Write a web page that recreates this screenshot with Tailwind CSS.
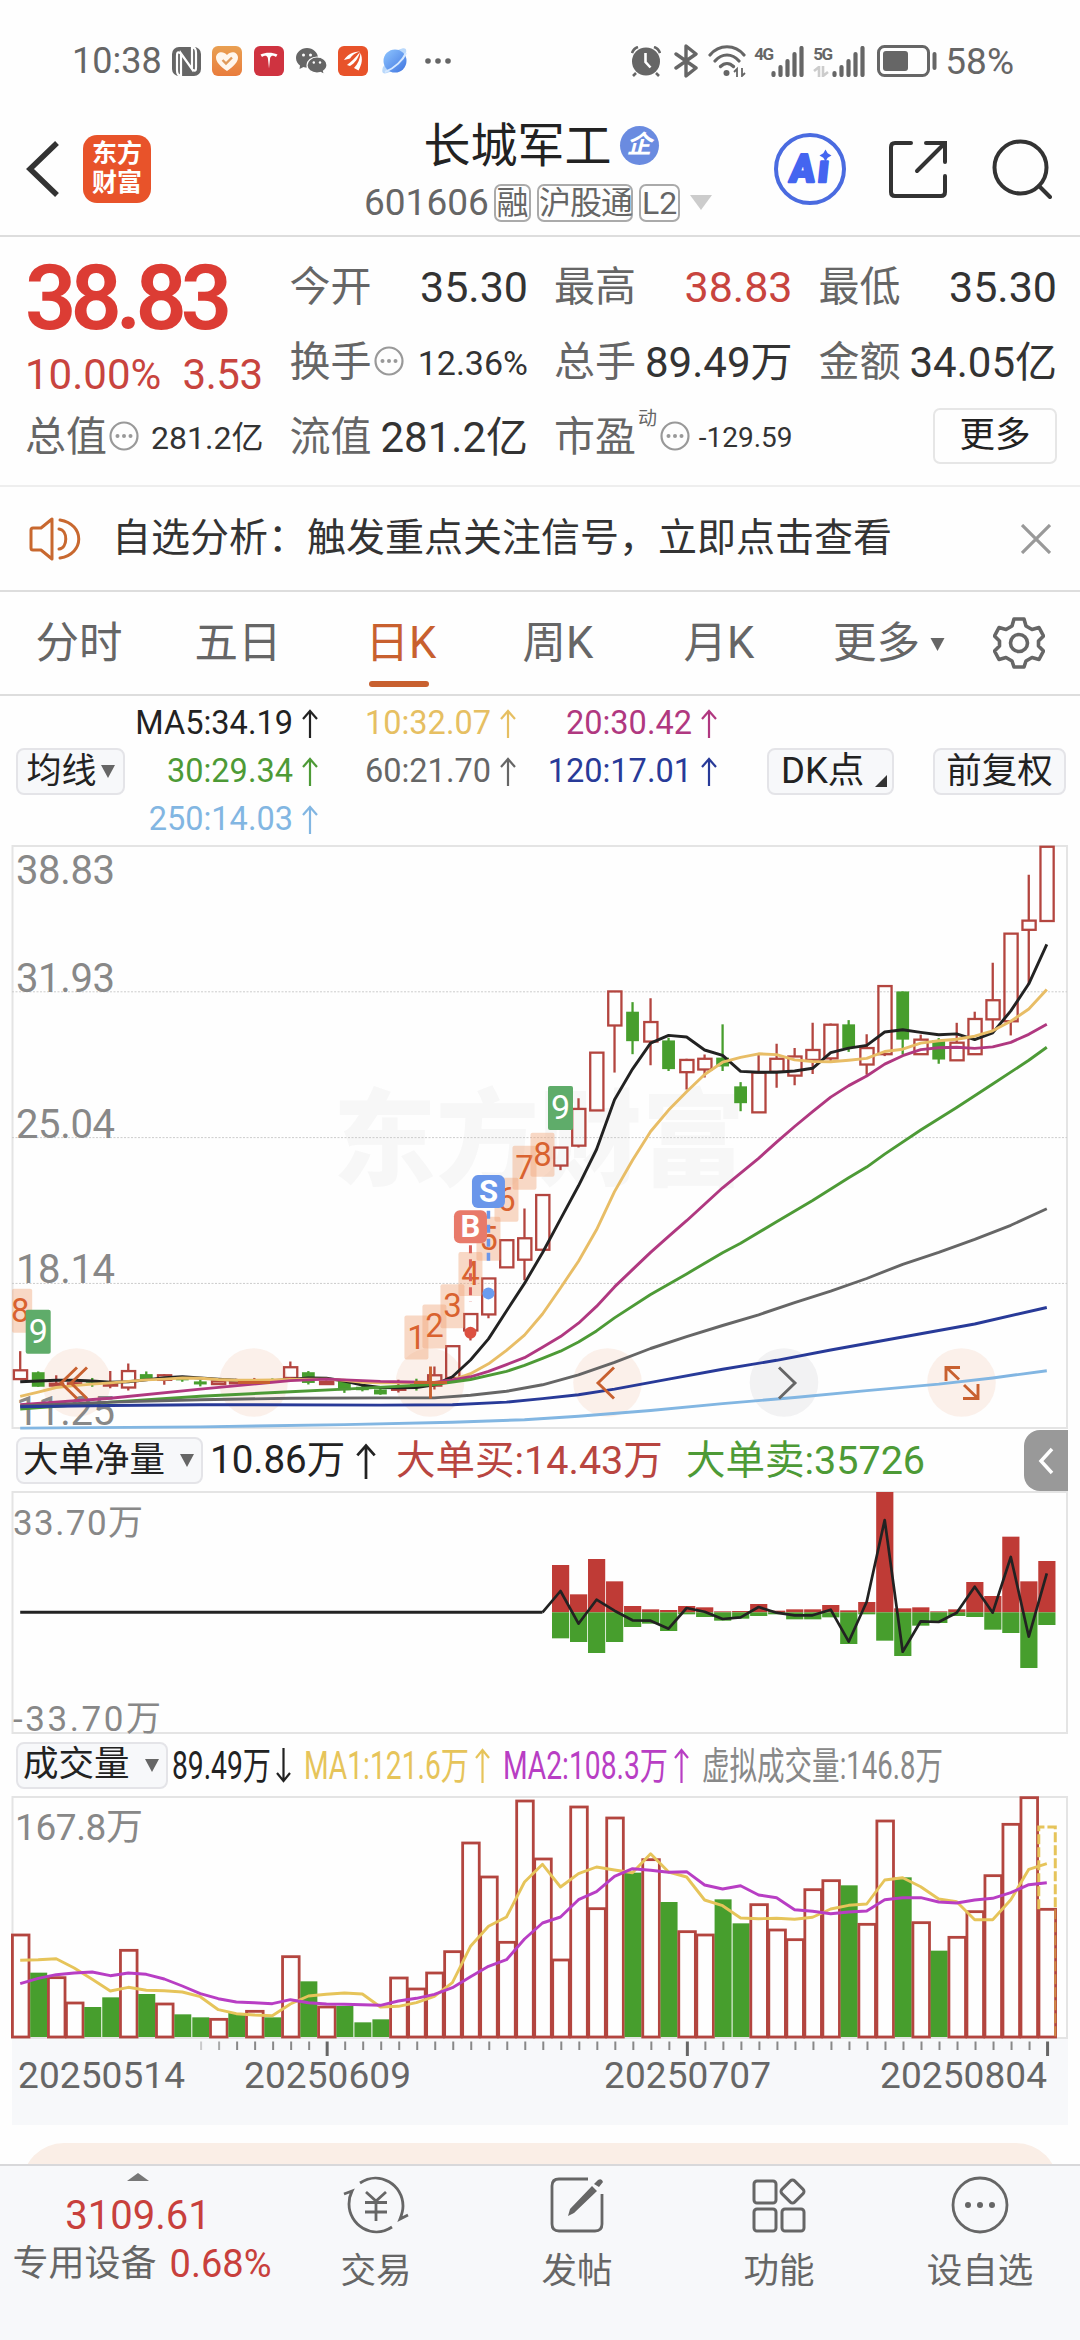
<!DOCTYPE html>
<html lang="zh-CN">
<head>
    <meta charset="UTF-8">
    <meta name="viewport" content="width=device-width, initial-scale=1.0">
    <title>长城军工 601606</title>
    <script src="https://cdn.jsdelivr.net/npm/@tailwindcss/browser@4"></script>
</head>
<body class="bg-[#fefefe] font-['Roboto','Noto_Sans_CJK_SC',sans-serif] text-[#333] w-[1080px] h-[2340px] overflow-hidden flex flex-col leading-none whitespace-nowrap">

    <svg class="hidden">
        <symbol id="arrow-up" viewBox="0 0 16 29"><path d="M8 29V2M1 10L8 2l7 8" fill="none" stroke="currentColor" stroke-width="2.200"/></symbol>
        <symbol id="caret" viewBox="0 0 14 13"><path d="M0 0h14L7 13z" fill="currentColor"/></symbol>
        <symbol id="info" viewBox="0 0 30 30">
            <circle cx="15" cy="15" r="13.5" fill="none" stroke="#999" stroke-width="2.200"/>
            <g fill="#999"><circle cx="8.5" cy="15" r="2"/><circle cx="15" cy="15" r="2"/><circle cx="21.500" cy="15" r="2"/></g>
        </symbol>
        <symbol id="bars" viewBox="0 0 33 31">
            <path d="M2.500 27v2M9.500 21v8M16.500 15v14M23.500 8v21M30.500 2v27" stroke="#666" stroke-width="4.200" stroke-linecap="round"/>
        </symbol>
    </svg>

    <!-- status bar -->
    <div class="h-[122px] shrink-0 flex items-center pl-[72px] pr-[66px] text-[#666]">
        <span class="text-[36px] w-[100px]">10:38</span>
        <svg class="w-[29px] h-[29px] mr-[11px]" viewBox="0 0 29 29">
            <rect width="29" height="29" rx="7" fill="#666"/>
            <path d="M9 29V6.500L20 22V0M9 6.500C5 4 5 6 5 9v14c0 4 1 5 4 6M20 22.500c4 2.500 4 .5 4-2.500V6c0-4-1-5-4-6" fill="none" stroke="#fff" stroke-width="2.200"/>
        </svg>
        <svg class="w-[30px] h-[30px] mr-[12px]" viewBox="0 0 30 30">
            <defs><linearGradient id="heart-bg" x2="0" y2="1"><stop stop-color="#e9a052"/><stop offset="1" stop-color="#e97c3c"/></linearGradient></defs>
            <rect width="30" height="30" rx="6" fill="url(#heart-bg)"/>
            <path d="M15 25C8 20 4 16 4 11.500 4 6 11 4 15 9c4-5 11-3 11 2.500C26 16 22 20 15 25z" fill="#fff6ec"/>
            <path d="M10.500 14l3.500 3.500 6-6" fill="none" stroke="#e09a5a" stroke-width="2.400"/>
        </svg>
        <svg class="w-[30px] h-[30px] mr-[12px]" viewBox="0 0 30 30">
            <rect width="30" height="30" rx="6" fill="#cf3340"/>
            <path d="M6.500 8.500C12 6 18 6 23.500 8.500L22 11c-1-1-2.500-1.200-4-1.300-1.500.8-2 2-2 3.500L15 22.500l-1-9.300c0-1.500-.5-2.700-2-3.500-1.500.1-3 .3-4 1.300z" fill="#fff"/>
        </svg>
        <svg class="w-[31px] h-[27px] mr-[11px]" viewBox="0 0 31 27">
            <path d="M11 0C5 0 0 4.500 0 10c0 3.500 2 6 4 7.500L3.500 21l4-2c1 .4 2.500.5 3.500.5C17 19.500 22 15.500 22 10S17 0 11 0z" fill="#666"/>
            <path d="M21 9c-5.500 0-10 3.700-10 8.200S15.500 25 21 25c1.500 0 2.500-.2 3.500-.5l4 2-1-3.500c2-1.300 3.500-3.300 3.500-6C31 12.700 26.500 9 21 9z" fill="#666" stroke="#fff" stroke-width="1.200"/>
            <g fill="#fff"><circle cx="7.500" cy="7" r="1.500"/><circle cx="14.500" cy="7" r="1.500"/><circle cx="17.800" cy="14.500" r="1.200"/><circle cx="24" cy="14.500" r="1.200"/></g>
        </svg>
        <svg class="w-[30px] h-[30px] mr-[14px]" viewBox="0 0 30 30">
            <rect width="30" height="30" rx="6" fill="#e8532a"/>
            <path d="M6 14C9 9 14 6 22 5.500 17 7 14 9 12 12.500L6 14zM9 19c4-3 8-7 13-13-1.500 6-5 11-10 14zM16 22c4-4 6-9 6.500-15 2.500 6 1.500 11-2 17.500z" fill="#fff"/>
        </svg>
        <svg class="w-[26px] h-[26px] mr-[17px]" viewBox="0 0 26 26">
            <defs><linearGradient id="planet" x2="1" y2="1"><stop stop-color="#8fc6ff"/><stop offset="1" stop-color="#3f74e0"/></linearGradient></defs>
            <path d="M16 2c7-3 9-2 8 3-1 6-9 15-16 19-7 3-9 1-7-5" fill="#b9d8fb"/>
            <circle cx="13" cy="13" r="11.500" fill="url(#planet)"/>
            <path d="M24 5C21 12 13 20 3 24" fill="none" stroke="#d5e8ff" stroke-width="2"/>
        </svg>
        <svg class="w-[26px] h-[6px]" viewBox="0 0 26 6"><g fill="#666"><circle cx="3" cy="3" r="2.800"/><circle cx="13" cy="3" r="2.800"/><circle cx="23" cy="3" r="2.800"/></g></svg>

        <div class="ml-auto flex items-center">
            <svg class="w-[30px] h-[31px] mr-[13px]" viewBox="0 0 30 31">
                <circle cx="15" cy="15.500" r="14" fill="#666"/>
                <path d="M1 7C2 4 4 2 7 1M29 7c-1-3-3-5-6-6M5 27l-3 3M25 27l3 3" stroke="#666" stroke-width="2.600" fill="none"/>
                <path d="M14.500 7v9l5 5.500" fill="none" stroke="#fff" stroke-width="2.600"/>
            </svg>
            <svg class="w-[24px] h-[34px] mr-[10px]" viewBox="0 0 24 34"><path d="M2 10l20 14-10 8V2l10 8L2 24" fill="none" stroke="#666" stroke-width="3.400" stroke-linejoin="round" stroke-linecap="round"/></svg>
            <svg class="w-[38px] h-[32px] mr-[8px]" viewBox="0 0 38 32">
                <path d="M2 10C11-1 27-1 36 10M7 16c7-8 17-8 24 0M12.500 21.500c4-4 9-4 13 0" fill="none" stroke="#666" stroke-width="3.200" stroke-linecap="round"/>
                <circle cx="18.500" cy="28" r="3" fill="#666"/>
                <path d="M26 27l3-3v8M37 28l-3 3v-8" fill="none" stroke="#666" stroke-width="1.800"/>
            </svg>
            <div class="flex mr-[9px]">
                <span class="text-[17px] font-bold w-[17px] tracking-[-1.500px]">4G</span>
                <svg class="w-[33px] h-[31px]"><use href="#bars"/></svg>
            </div>
            <div class="flex mr-[12px]">
                <div class="w-[19px]">
                    <div class="text-[17px] font-bold tracking-[-1.500px]">5G</div>
                    <svg class="w-[16px] h-[11px] mt-[3px]" viewBox="0 0 16 11"><path d="M1 5l5-4v10M15 6l-5 4V0" fill="none" stroke="#ccc" stroke-width="2.600"/></svg>
                </div>
                <svg class="w-[33px] h-[31px]"><use href="#bars"/></svg>
            </div>
            <svg class="w-[60px] h-[32px] mr-[8px]" viewBox="0 0 60 32">
                <rect x="1.500" y="1.500" width="50" height="29" rx="6" fill="none" stroke="#666" stroke-width="3"/>
                <rect x="6" y="6" width="25" height="20" rx="3" fill="#666"/>
                <path d="M57.500 9v14" stroke="#666" stroke-width="4" stroke-linecap="round"/>
            </svg>
            <span class="text-[37px]">58%</span>
        </div>
    </div>

    <!-- title bar -->
    <header class="h-[115px] shrink-0 flex items-center border-b-2 border-[#ddd]">
        <svg class="w-[34px] h-[56px] ml-[26px] mt-[-20px]" viewBox="0 0 34 56"><path d="M31 2L4 28l27 26" fill="none" stroke="#333" stroke-width="5.500"/></svg>
        <div class="w-[68px] h-[68px] ml-[23px] mt-[-20px] rounded-[14px] bg-[#e8532a] text-white font-bold text-[25px] leading-[29px] pt-[4px] text-center">东方<br>财富</div>
        <div class="ml-[213px] w-[348px] mt-[-15px] flex flex-col items-center">
            <div class="flex items-center h-[50px] pl-[6px]">
                <span class="text-[47px] text-[#222] leading-[50px]">长城军工</span>
                <span class="ml-[8px] w-[39px] h-[39px] rounded-full bg-[#6a8be0] text-white text-[25px] font-bold italic leading-[38px] text-center">企</span>
            </div>
            <div class="mt-[13px] flex items-center text-[#666] text-[32px]">
                <span class="text-[37px] w-[130px]">601606</span>
                <span class="w-[37px] h-[38px] leading-[34px] border-2 border-[#aaa] rounded-[7px] text-center mr-[6px]">融</span>
                <span class="w-[96px] h-[38px] leading-[34px] border-2 border-[#aaa] rounded-[7px] text-center mr-[6px] tracking-[-1px]">沪股通</span>
                <span class="w-[41px] h-[38px] leading-[35px] border-2 border-[#aaa] rounded-[7px] text-center mr-[10px]">L2</span>
                <svg class="w-[22px] h-[15px] text-[#ccc]" viewBox="0 0 14 13" preserveAspectRatio="none"><path d="M0 0h14L7 13z" fill="currentColor"/></svg>
            </div>
        </div>
        <svg class="w-[72px] h-[72px] ml-[62px] mt-[-20px]" viewBox="0 0 72 72">
            <circle cx="36" cy="36" r="34" fill="none" stroke="#4a6be0" stroke-width="4"/>
            <g transform="skewX(-6)" font-size="39" font-weight="900" fill="#4465f0" stroke="#4465f0" stroke-width="2.500" stroke-linejoin="round">
                <text x="20" y="49.500" textLength="25" lengthAdjust="spacingAndGlyphs">A</text>
                <text x="48" y="49.500" textLength="11" lengthAdjust="spacingAndGlyphs">ı</text>
            </g>
            <path d="M51.500 16.500l2.200 3.800 3.800 2.200-3.800 2.200-2.200 3.800-2.200-3.800-3.800-2.200 3.800-2.200z" fill="#4465f0"/>
        </svg>
        <svg class="w-[58px] h-[58px] ml-[43px] mt-[-20px]" viewBox="0 0 58 58"><path d="M22 3H6q-4 0-4 4v45q0 4 4 4h46q4 0 4-4V36M37 3h19v19M55 4L28 31" fill="none" stroke="#333" stroke-width="4" stroke-linecap="round"/></svg>
        <svg class="w-[60px] h-[60px] ml-[45px] mt-[-20px]" viewBox="0 0 60 60"><circle cx="28.500" cy="28.500" r="26" fill="none" stroke="#333" stroke-width="4"/><path d="M47 47l11 11" stroke="#333" stroke-width="4" stroke-linecap="round"/></svg>
    </header>

    <!-- quote summary -->
    <section class="h-[250px] shrink-0 grid grid-cols-4 grid-rows-[75px_75px_75px] gap-x-[26px] pt-[13px] pl-[25px] pr-[23px] border-b-2 border-[#eee] text-[#333] text-[43px]">
        <div class="row-span-2 text-[#dc3c34]">
            <div class="text-[90px] font-semibold tracking-[-6px] leading-[98px]">38.83</div>
            <div class="flex justify-between text-[42px] leading-[54px] text-[#c8443e] pr-[1px]"><span>10.00%</span><span class="tracking-[-0.5px]">3.53</span></div>
        </div>
        <div class="flex items-center justify-between"><span class="text-[#666] text-[41px]">今开</span><span>35.30</span></div>
        <div class="flex items-center justify-between"><span class="text-[#666] text-[41px]">最高</span><span class="text-[#c8443e]">38.83</span></div>
        <div class="flex items-center justify-between"><span class="text-[#666] text-[41px]">最低</span><span>35.30</span></div>
        <div class="flex items-center"><span class="text-[#666] text-[41px]">换手</span><svg class="w-[30px] h-[30px] ml-[2px] mt-[-4px]"><use href="#info"/></svg><span class="ml-auto text-[34px]">12.36%</span></div>
        <div class="flex items-center justify-between"><span class="text-[#666] text-[41px]">总手</span><span class="text-[42px]">89.49万</span></div>
        <div class="flex items-center justify-between"><span class="text-[#666] text-[41px]">金额</span><span class="text-[42px]">34.05亿</span></div>
        <div class="flex items-center"><span class="text-[#666] text-[41px]">总值</span><svg class="w-[30px] h-[30px] ml-[2px] mt-[-4px]"><use href="#info"/></svg><span class="ml-auto text-[32px]">281.2亿</span></div>
        <div class="flex items-center justify-between"><span class="text-[#666] text-[41px]">流值</span><span class="text-[42px]">281.2亿</span></div>
        <div class="flex items-center"><span class="text-[#666] text-[41px]">市盈</span><span class="text-[#666] text-[19px] mb-[38px] ml-[2px]">动</span><svg class="w-[30px] h-[30px] ml-[3px] mt-[-4px]"><use href="#info"/></svg><span class="ml-auto text-[28px]">-129.59</span></div>
        <div class="flex items-center justify-end"><span class="w-[124px] h-[56px] mt-[-3px] border-2 border-[#e6e6e6] rounded-[7px] text-[35.500px] leading-[50px] text-center text-[#222]">更多</span></div>
    </section>

    <!-- signal notice -->
    <section class="h-[105px] shrink-0 flex items-center border-b-2 border-[#ddd] pl-[29px] pr-[29px]">
        <svg class="w-[52px] h-[44px]" viewBox="0 0 52 44">
            <path d="M23 2v40L12 33H4q-2 0-2-2V13q0-2 2-2h8z" fill="none" stroke="#c8682f" stroke-width="3" stroke-linejoin="round"/>
            <path d="M30 12c9 1 9 19 0 20M31 3c25 4 25 34 0 38" fill="none" stroke="#c8682f" stroke-width="3" stroke-linecap="round"/>
        </svg>
        <span class="ml-[31px] text-[39px]">自选分析：触发重点关注信号，立即点击查看</span>
        <svg class="ml-auto w-[30px] h-[30px]" viewBox="0 0 30 30"><path d="M1 1l28 28M29 1L1 29" stroke="#999" stroke-width="3.200"/></svg>
    </section>

    <!-- period tabs -->
    <nav class="h-[104px] shrink-0 flex items-center border-b-2 border-[#ddd] text-[43.500px] text-[#666] text-center">
        <span class="w-[158px] mt-[2px]">分时</span>
        <span class="w-[160px] mt-[2px]">五日</span>
        <div class="w-[166px] h-full flex flex-col items-center text-[#c8602f]">
            <span class="leading-[104px] h-[89px]">日K</span>
            <span class="w-[60px] h-[6px] rounded-full bg-[#c8602f] mr-[4px]"></span>
        </div>
        <span class="w-[148px] mt-[2px]">周K</span>
        <span class="w-[174px] mt-[2px]">月K</span>
        <span class="w-[166px] mt-[2px] flex items-center justify-center gap-[10px]">更多<svg class="w-[15px] h-[13px]"><use href="#caret"/></svg></span>
        <svg class="w-[52px] h-[52px] ml-[21px]" viewBox="0 0 52 52">
            <path d="M21 2h10l2 7 6 3.500 7-2 4.500 8.500-5 5v5l5 5-4.500 8.500-7-2-6 3.500-2 6H21l-2-6-6-3.500-7 2L1.500 34l5-5v-5l-5-5L6 10.500l7 2L19 9z" fill="none" stroke="#666" stroke-width="3.600" stroke-linejoin="round"/>
            <circle cx="26" cy="26" r="8.500" fill="none" stroke="#666" stroke-width="3.600"/>
        </svg>
    </nav>

    <!-- moving average legend -->
    <section class="h-[150px] shrink-0 flex items-center pl-[16px] pr-[14px] text-[32.500px]">
        <div class="w-[109px] h-[47px] border-2 border-[#e4e4e8] bg-[#f7f8fa] rounded-[8px] flex items-center justify-center gap-[4px] text-[35px] text-[#222]">均线<svg class="w-[14px] h-[13px] text-[#666]"><use href="#caret"/></svg></div>
        <div class="grid grid-cols-[193px_198px_201px] grid-rows-[48px_48px_48px] items-center">
            <span class="flex justify-end items-center gap-[9px] text-[#222]">MA5:34.19<svg class="w-[16px] h-[29px]"><use href="#arrow-up"/></svg></span>
            <span class="flex justify-end items-center gap-[9px] text-[#e6bf62]">10:32.07<svg class="w-[16px] h-[29px]"><use href="#arrow-up"/></svg></span>
            <span class="flex justify-end items-center gap-[9px] text-[#b03880]">20:30.42<svg class="w-[16px] h-[29px]"><use href="#arrow-up"/></svg></span>
            <span class="flex justify-end items-center gap-[9px] text-[#4d9a36]">30:29.34<svg class="w-[16px] h-[29px]"><use href="#arrow-up"/></svg></span>
            <span class="flex justify-end items-center gap-[9px] text-[#666]">60:21.70<svg class="w-[16px] h-[29px]"><use href="#arrow-up"/></svg></span>
            <span class="flex justify-end items-center gap-[9px] text-[#283a98]">120:17.01<svg class="w-[16px] h-[29px]"><use href="#arrow-up"/></svg></span>
            <span class="flex justify-end items-center gap-[9px] text-[#82b6e2]">250:14.03<svg class="w-[16px] h-[29px]"><use href="#arrow-up"/></svg></span>
        </div>
        <div class="ml-auto w-[127px] h-[47px] border-2 border-[#e4e4e8] bg-[#f7f8fa] rounded-[8px] flex items-center pl-[12px] text-[36.500px] text-[#222]">DK点<svg class="w-[12px] h-[12px] ml-auto mr-[5px] mt-[20px]" viewBox="0 0 12 12"><path d="M12 0v12H0z" fill="#333"/></svg></div>
        <div class="ml-[39px] w-[133px] h-[47px] border-2 border-[#e4e4e8] bg-[#f7f8fa] rounded-[8px] text-[35.500px] leading-[43px] text-center text-[#222]">前复权</div>
    </section>

    <svg id="kline" class="w-[1080px] h-[583px] shrink-0 overflow-visible"></svg>

    <!-- net large orders -->
    <div class="h-[63px] shrink-0 flex items-center pl-[16px] pr-[12px] text-[38px] text-[#222]">
        <div class="w-[187px] h-[47px] border-2 border-[#e4e4e8] bg-[#f7f8fa] rounded-[8px] flex items-center pl-[5px] text-[35.500px]">大单净量<svg class="w-[14px] h-[13px] ml-auto mr-[7px] text-[#666]"><use href="#caret"/></svg></div>
        <span class="ml-[7px] w-[146px] text-[38.500px]">10.86万</span>
        <svg class="w-[20px] h-[36px]"><use href="#arrow-up"/></svg>
        <span class="ml-[20px] w-[290px] text-[#b84540] text-[39.500px]">大单买:14.43万</span>
        <span class="text-[#4d9a36] text-[39.500px]">大单卖:35726</span>
        <div class="ml-auto w-[44px] h-[61px] rounded-l-[16px] bg-[#999] flex items-center justify-center"><svg class="w-[16px] h-[28px]" viewBox="0 0 16 28"><path d="M14 2L3 14l11 12" fill="none" stroke="#fff" stroke-width="3.500"/></svg></div>
    </div>

    <svg id="flow" class="w-[1080px] h-[241px] shrink-0 overflow-visible"></svg>

    <!-- volume -->
    <div class="h-[64px] shrink-0 flex items-center pl-[16px]">
        <div class="w-[152px] h-[47px] border-2 border-[#e4e4e8] bg-[#f7f8fa] rounded-[8px] flex items-center pl-[5px] text-[35.500px] text-[#222]">成交量<svg class="w-[14px] h-[13px] ml-auto mr-[7px] text-[#666]"><use href="#caret"/></svg></div>
        <svg class="w-[900px] h-[64px]" viewBox="168 0 900 64" font-size="38">
            <text x="172" y="46" fill="#222" textLength="99" lengthAdjust="spacingAndGlyphs">89.49万</text>
            <text x="304" y="46" fill="#e6c45a" textLength="165" lengthAdjust="spacingAndGlyphs">MA1:121.6万</text>
            <text x="503" y="46" fill="#b83ec4" textLength="165" lengthAdjust="spacingAndGlyphs">MA2:108.3万</text>
            <text x="702" y="46" fill="#888" textLength="241" lengthAdjust="spacingAndGlyphs">虚拟成交量:146.8万</text>
            <g fill="none" stroke-width="2.200">
                <path d="M283.500 15v33M277 40l6.500 8 6.500-8" stroke="#222"/>
                <path d="M482.500 50V17M476 25l6.500-8 6.500 8" stroke="#e6c45a"/>
                <path d="M681.500 50V17M675 25l6.500-8 6.500 8" stroke="#b83ec4"/>
            </g>
        </svg>
    </div>

    <svg id="volume" class="w-[1080px] h-[328px] shrink-0 overflow-visible"></svg>

    <div class="h-[39px] shrink-0 pt-[18px] px-[22px] overflow-hidden"><div class="h-[60px] rounded-t-[42px] bg-[#faeee6]"></div></div>

    <!-- bottom bar -->
    <footer class="h-[176px] shrink-0 bg-[#f7f8fa] border-t-2 border-[#d8d8da] flex text-[35.500px] text-[#666]">
        <div class="w-[276px] flex flex-col items-center">
            <svg class="w-[22px] h-[8px] mt-[7px]" viewBox="0 0 22 8"><path d="M11 0l11 8H0z" fill="#777"/></svg>
            <span class="mt-[15px] text-[40px] text-[#c8403c]">3109.61</span>
            <span class="mt-[9px] flex items-center pl-[8px] text-[36px]">专用设备<span class="ml-[13px] text-[38px] text-[#c8403c]">0.68%</span></span>
        </div>
        <div class="w-[200px] flex flex-col items-center">
            <svg class="w-[66px] h-[60px] mt-[9px]" viewBox="0 0 66 60" fill="none" stroke="#666" stroke-width="2.800">
                <path d="M17 8C37-5 60 10 60 31c0 5-1 8-3 13l8-4"/>
                <path d="M49 52C29 65 6 50 6 29c0-5 1-9 3-13l-8 3"/>
                <path d="M23 17l10 9 10-9M22 27.500h22M22 37h22M33 26v20"/>
            </svg>
            <span class="mt-[19px]">交易</span>
        </div>
        <div class="w-[202px] flex flex-col items-center">
            <svg class="w-[56px] h-[60px] mt-[9px]" viewBox="0 0 56 60">
                <path d="M39 4H10q-7 0-7 7v38q0 7 7 7h36q7 0 7-7V19" fill="none" stroke="#666" stroke-width="2.800"/>
                <path d="M43 11l5 5-23 22-6 3 2-7zM45 9l4-4q4-2 5 2l-4 5z" fill="#666"/>
            </svg>
            <span class="mt-[19px]">发帖</span>
        </div>
        <div class="w-[202px] flex flex-col items-center">
            <svg class="w-[54px] h-[60px] mt-[9px]" viewBox="0 0 54 60" fill="none" stroke="#666" stroke-width="3">
                <rect x="2" y="6" width="22" height="22" rx="3"/>
                <rect x="2" y="34" width="22" height="22" rx="3"/>
                <rect x="30" y="34" width="22" height="22" rx="3"/>
                <rect x="31.500" y="7.500" width="18" height="18" rx="3" transform="rotate(45 40.500 16.500)"/>
            </svg>
            <span class="mt-[19px]">功能</span>
        </div>
        <div class="w-[200px] flex flex-col items-center">
            <svg class="w-[58px] h-[60px] mt-[9px]" viewBox="0 0 58 60">
                <circle cx="29" cy="30" r="27" fill="none" stroke="#666" stroke-width="2.800"/>
                <g fill="#666"><circle cx="17" cy="30" r="3"/><circle cx="29" cy="30" r="3"/><circle cx="41" cy="30" r="3"/></g>
            </svg>
            <span class="mt-[19px]">设自选</span>
        </div>
    </footer>

    <script>
        const RED = '#b3453f', GREEN = '#479e2d';
        const x = i => 20.2 + 18.01 * i;
        const path = (pts, y) => 'M' + pts.map(([i, v]) => x(i).toFixed(1) + ' ' + y(v).toFixed(1)).join('L');
        const line = (pts, y, color, w = 2.9) => `<path d="${path(pts, y)}" fill="none" stroke="${color}" stroke-width="${w}" stroke-linejoin="round"/>`;
        const frame = h => `<rect x="12.5" y="0" width="1054.500" height="${h}" fill="none" stroke="#e4e4e4" stroke-width="2"/>`;
        const seq = a => a.map((v, i) => [i, v]);

        // ---- candles: up/down, high, body top, body bottom, low ----
        const candles = [
            ['r',1335,1385,1408,1408],['g',1388,1390,1428,1428],['r',1398,1420,1425,1425],['r',1410,1419,1423,1426],['g',1405,1412,1416,1428],
            ['r',1387,1422,1425,1432],['r',1367,1387,1430,1438],['g',1388,1395,1408,1410],['r',1395,1398,1410,1423],['g',1400,1406,1410,1415],
            ['g',1410,1414,1422,1427],['r',1410,1414,1421,1423],['r',1407,1413,1419,1420],['r',1405,1412,1418,1418],['g',1406,1409,1413,1414],
            ['r',1362,1377,1405,1407],['g',1387,1390,1418,1422],['r',1408,1415,1421,1422],['g',1410,1412,1437,1444],['g',1425,1428,1437,1440],
            ['g',1430,1435,1448,1449],['r',1410,1430,1436,1443],['g',1407,1420,1426,1438],['r',1375,1398,1425,1435],['r',1322,1322,1405,1405],
            ['r',1238,1238,1281,1307],['r',1145,1145,1239,1249],['r',1045,1045,1116,1116],['r',962,1040,1096,1150],['r',927,927,1070,1070],
            ['r',803,803,850,862],['r',674,702,798,803],['r',555,555,706,706],['r',395,395,484,607],['g',423,448,525,559],
            ['r',413,475,526,588],['g',516,523,598,603],['r',571,574,606,651],['r',560,571,599,620],['g',481,568,591,603],
            ['g',632,643,687,708],['r',560,607,711,711],['r',532,571,605,647],['r',543,565,615,640],['r',477,548,574,611],
            ['r',479,482,570,577],['g',470,481,543,553],['r',507,543,586,613],['r',381,381,559,564],['g',395,395,521,560],
            ['r',508,521,559,559],['g',517,522,573,584],['r',477,529,575,575],['r',448,467,559,559],['r',320,418,468,500],
            ['r',244,244,473,510],['r',90,210,234,375],['r',17,17,211,211]
        ];
        const ma5 = seq([1415,1413,1411,1411,1413,1416,1415,1410,1404,1402,1405,1408,1411,1412,1412,1409,1405,1406,1413,1424,1430,1431,1430,1423,1402,1358,1303,1230,1158,1078,990,903,808,678,598,530,510,514,548,562,604,606,606,603,596,555,543,536,501,495,502,508,506,521,503,446,375,272]);
        const ma10 = seq([1453,1442,1430,1425,1421,1418,1414,1410,1408,1405,1406,1409,1411,1411,1410,1409,1408,1408,1411,1416,1418,1418,1418,1418,1411,1394,1368,1333,1293,1238,1170,1100,1018,918,836,761,705,657,612,580,567,558,560,574,578,579,575,570,552,546,530,524,520,512,498,473,441,390]);
        const ma20 = [[0,1475],[5,1458],[10,1434],[15,1412],[17,1408],[20,1414],[23,1417],[24,1410],[25,1402],[26,1388],[27,1370],[28,1352],[29,1325],[30,1297],[31,1262],[32,1218],[33,1167],[34,1122],[35,1077],[36,1035],[37,994],[38,951],[39,908],[40,870],[41,831],[42,789],[43,748],[44,709],[45,671],[46,641],[47,616],[48,585],[49,563],[50,547],[51,542],[52,541],[53,544],[54,540],[55,528],[56,507],[57,481]];
        const ma30 = [[0,1486],[3,1476],[5,1468],[10,1453],[15,1441],[18,1434],[23,1422],[25,1409],[27,1388],[28,1372],[29,1354],[30,1335],[31,1311],[32,1282],[33,1248],[35,1187],[37,1133],[39,1078],[40,1053],[42,997],[44,941],[46,882],[47,854],[48,820],[50,757],[52,698],[54,637],[56,575],[57,541]];
        const ma60 = [[0,1478],[5,1468],[10,1462],[15,1458],[20,1457],[23,1457],[25,1450],[27,1440],[29,1423],[31,1397],[33,1364],[35,1328],[37,1297],[39,1268],[41,1240],[43,1208],[45,1178],[47,1145],[49,1108],[51,1077],[53,1043],[55,1006],[57,963]];
        const ma120 = [[0,1480],[5,1477],[10,1475],[20,1476],[24,1475],[27,1468],[29,1459],[31,1449],[33,1434],[36,1408],[39,1382],[42,1359],[45,1332],[49,1298],[53,1264],[57,1221]];
        const ma250 = [[0,1536],[10,1533],[18,1527],[24,1521],[28,1514],[31,1505],[35,1490],[39,1472],[43,1456],[47,1438],[51,1421],[54,1405],[57,1386]];

        const ky = v => (v - 15) * 0.3827;
        let s = frame(582);
        s += '<text x="333" y="331" font-size="105" font-weight="900" fill="#f7f7f7" textLength="412" lengthAdjust="spacingAndGlyphs">东方财富</text>';
        [396, 777, 1158].forEach(v => s += `<path d="M12 ${ky(v)}H1067" stroke="#ccc" stroke-dasharray="2 1.500"/>`);

        // round tool buttons under the curves
        [76.500, 253.500, 430, 607.500, 784, 961.500].forEach((cx, i) =>
            s += `<circle cx="${cx}" cy="536.500" r="34.300" fill="${i === 4 ? '#f2f2f3' : '#fbf0ea'}"/>`);

        [[114, '38.83'], [396, '31.93'], [777, '25.04'], [1158, '18.14'], [1527, '11.25']].forEach(([v, t]) =>
            s += `<text x="16" y="${ky(v)}" font-size="40" fill="#888" textLength="99">${t}</text>`);

        candles.forEach(([c, hi, top, bot, lo], i) => {
            const cx = x(i), t = ky(top), b = ky(bot);
            if (c === 'g') {
                s += `<path d="M${cx} ${ky(hi)}V${ky(lo)}" stroke="${GREEN}" stroke-width="2.300"/><rect x="${cx - 6.4}" y="${t}" width="12.8" height="${Math.max(b - t, 2)}" fill="${GREEN}"/>`;
            } else {
                s += `<path d="M${cx} ${ky(hi)}V${t}M${cx} ${b}V${ky(lo)}" stroke="${RED}" stroke-width="2.300"/><rect x="${cx - 6.3}" y="${t}" width="13.2" height="${Math.max(b - t, 1)}" fill="none" stroke="${RED}" stroke-width="2.300"/>`;
            }
        });
        s += line(ma5, ky, '#222') + line(ma10, ky, '#e8bd66') + line(ma20, ky, '#b03880') + line(ma30, ky, '#4d9a36')
            + line(ma60, ky, '#666') + line(ma120, ky, '#283a98') + line(ma250, ky, '#82b6e2');

        // nine-count marks
        [[0,1172,'8'],[22,1242,'1'],[23,1213,'2'],[24,1160,'3'],[25,1076,'4'],[26,984,'5'],[27,882,'6'],[28,798,'7'],[29,764,'8']].forEach(([i, v, t]) => {
            const left = Math.max(x(i) - 12, 12);
            s += `<rect x="${left}" y="${ky(v)}" width="${x(i) + 12 - left}" height="44" rx="2" fill="#f0a070" fill-opacity=".4"/>`;
            s += `<text x="${x(i)}" y="${ky(v) + 33}" font-size="33" fill="#d9622f" text-anchor="middle">${t}</text>`;
        });
        [[1, 1227], [30, 642]].forEach(([i, v]) => {
            s += `<rect x="${x(i) - 12.5}" y="${ky(v)}" width="25" height="44" rx="2" fill="#5fac6a"/>`;
            s += `<text x="${x(i)}" y="${ky(v) + 33}" font-size="34" fill="#fff" text-anchor="middle">9</text>`;
        });

        // buy / sell flags
        s += `<path d="M${x(25)} ${ky(1058)}V${ky(1205)}" stroke="#d9605a" stroke-width="3" stroke-dasharray="8 6"/>`;
        s += `<path d="M${x(26)} ${ky(968)}V${ky(1112)}" stroke="#6a96ea" stroke-width="3.500" stroke-dasharray="8 6"/>`;
        s += `<circle cx="${x(25)}" cy="${ky(1287)}" r="6" fill="#dc5040"/><circle cx="${x(26)}" cy="${ky(1184)}" r="6" fill="#6a9cf0"/>`;
        s += `<rect x="${x(25) - 16.5}" y="${ky(967)}" width="33" height="33" rx="6" fill="#e87a6a"/><text x="${x(25)}" y="${ky(967) + 27}" font-size="31" font-weight="700" fill="#fff" text-anchor="middle">B</text>`;
        s += `<rect x="${x(26) - 16.5}" y="${ky(875)}" width="33" height="33" rx="6" fill="#6a96ea"/><text x="${x(26)}" y="${ky(875) + 27}" font-size="31" font-weight="700" fill="#fff" text-anchor="middle">S</text>`;

        s += `<g fill="none" stroke="#c8602f" stroke-width="2.900">
            <path d="M77 521.500l-16 15.500 16 15.500M87 521.500l-16 15.500 16 15.500"/>
            <path d="M238 536.500h32M414 536.500h33M430.500 520.500v32"/>
            <path d="M614 521.500l-16 15.500 16 15.500"/>
            <path d="M946 535v-13.500h14M947 522l12 11.500M978 538v14.500h-15M977 551.500l-13-12.500"/>
        </g><path d="M779 521.500l16 15.500-16 15.500" fill="none" stroke="#666" stroke-width="2.900"/>`;
        document.getElementById('kline').innerHTML = s;

        // ---- large order flow: buy top, sell bottom, net ----
        const flow = [
            [435,655,513],[523,666,611],[417,699,539],[484,666,572],[558,621,601],[568,611,602],[570,633,626],[558,583,564],[562,591,575],[574,602,597],
            [573,596,592],[552,588,561],[572,583,578],[568,598,586],[568,598,586],[555,592,569],[571,672,665],[546,583,545],[216,662,300],[565,708,695],
            [562,617,604],[574,609,606],[568,588,578],[486,591,500],[528,629,578],[350,639,411],[484,744,650],[423,615,460]
        ];
        const fy = v => (v - 216) / 3;
        s = frame(241);
        flow.forEach(([up, down], i) => {
            const left = x(i + 30) - 8.5;
            s += `<rect x="${left}" y="${fy(up)}" width="17.200" height="${fy(577) - fy(up)}" fill="#bf3b36"/>`;
            s += `<rect x="${left}" y="${fy(577)}" width="17.200" height="${fy(down) - fy(577)}" fill="${GREEN}"/>`;
        });
        s += line([[0, 577], [29, 577]], fy, '#222', 3);
        s += line([[29, 577], ...flow.map((f, i) => [i + 30, f[2]])], fy, '#222', 2.7);
        s += '<text x="13" y="43" font-size="35" fill="#888" textLength="130">33.70万</text>';
        s += '<text x="13" y="239" font-size="35" fill="#888" textLength="148">-33.70万</text>';
        document.getElementById('flow').innerHTML = s;

        // ---- volume, negative for a falling day ----
        const vols = [434,-547,562,638,-650,-621,480,-611,641,-672,-681,687,-668,663,-681,499,-573,650,-647,-696,-687,563,596,548,484,158,260,456,32,206,509,50,355,83,-247,208,-335,424,434,-327,-399,343,419,448,298,271,-285,402,92,-261,397,-481,441,364,256,102,22,357];
        const vma1 = seq([510,508,505,533,567,602,591,600,601,605,619,658,670,674,676,641,617,612,608,611,650,648,637,618,577,468,408,380,275,222,290,250,230,239,247,190,245,260,329,346,383,385,384,387,381,356,345,341,269,262,289,326,334,388,388,328,237,220]);
        const vma2 = seq([580,564,553,548,545,556,548,552,566,587,610,625,635,637,640,628,637,641,642,643,645,632,624,612,592,559,528,508,446,398,380,328,304,258,235,240,246,244,284,296,286,314,322,358,363,370,365,362,328,322,322,335,338,329,324,307,283,277]);
        const vy = v => (v - 20) / 3;
        s = '<rect x="12" y="241" width="1056" height="87" fill="#f7f8fa"/>' + frame(241);
        s += '<text x="15" y="43" font-size="37" fill="#888" textLength="128">167.8万</text>';
        vols.forEach((v, i) => {
            const cx = x(i), t = vy(Math.abs(v));
            s += v < 0
                ? `<rect x="${cx - 8}" y="${t}" width="17" height="${240 - t}" fill="${GREEN}"/>`
                : `<rect x="${cx - 7.8}" y="${t}" width="16.6" height="${240 - t}" fill="none" stroke="${RED}" stroke-width="2.800"/>`;
        });
        s += `<path d="M${x(57) - 8} ${vy(357)}V${vy(110)}H${x(57) + 8.5}V${vy(357)}" fill="none" stroke="#e6c45a" stroke-width="3" stroke-dasharray="10 3"/>`;
        s += `<path d="M${x(57) + 8.5} ${vy(357)}V240" stroke="#d08a45" stroke-width="2" stroke-dasharray="10 3"/>`;
        s += line(vma1, vy, '#e6c45a') + line(vma2, vy, '#b83ec4');
        for (let i = 10; i < 58; i++) {
            const long = i === 17 || i === 37 || i === 57;
            s += `<path d="M${x(i) + .8} 244.500v${long ? 14.5 : 8.5}" stroke="${long ? '#666' : '#888'}" stroke-width="${long ? 3 : 2}" opacity="${i === 10 ? .4 : i === 11 ? .7 : 1}"/>`;
        }
        [[18, '20250514'], [244, '20250609'], [604, '20250707'], [880, '20250804']].forEach(([tx, t]) =>
            s += `<text x="${tx}" y="291" font-size="37" fill="#666" textLength="167">${t}</text>`);
        document.getElementById('volume').innerHTML = s;
    </script>
</body>
</html>
